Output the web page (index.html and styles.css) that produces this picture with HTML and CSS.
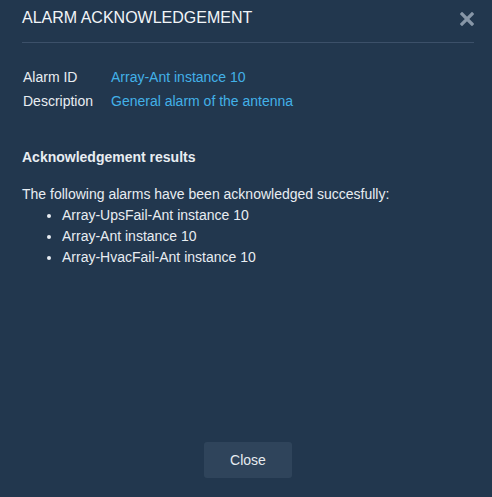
FILE: index.html
```html
<!DOCTYPE html>
<html>
<head>
<meta charset="utf-8">
<link rel="stylesheet" href="styles.css">
</head>
<body>
<div class="modal">
  <div class="header">
    <div class="title">ALARM ACKNOWLEDGEMENT</div>
    <span class="close-x" aria-label="close">
      <svg width="14" height="14" viewBox="0 0 14 14"><path d="M2 2 L12 12 M12 2 L2 12" stroke="#8796a7" stroke-width="3.2" stroke-linecap="square"/></svg>
    </span>
  </div>
  <div class="content">
    <div class="info">
      <div class="label">Alarm ID</div><div class="value">Array-Ant instance 10</div>
      <div class="label">Description</div><div class="value">General alarm of the antenna</div>
    </div>
    <div class="section-title">Acknowledgement results</div>
    <div class="intro">The following alarms have been acknowledged succesfully:</div>
    <ul class="list">
      <li>Array-UpsFail-Ant instance 10</li>
      <li>Array-Ant instance 10</li>
      <li>Array-HvacFail-Ant instance 10</li>
    </ul>
  </div>
  <div class="footer">
    <button class="btn">Close</button>
  </div>
</div>
</body>
</html>
```
FILE: styles.css
```css
html, body {
  margin: 0;
  padding: 0;
  background: #22374e;
}
body {
  font-family: "Liberation Sans", Arial, sans-serif;
  color: #e8edf2;
}
.modal {
  height: 497px;
  display: flex;
  flex-direction: column;
}
.header {
  margin: 0 18px 0 22px;
  padding-top: 8px;
  height: 43px;
  box-sizing: border-box;
  border-bottom: 1px solid #3c5069;
  display: flex;
  justify-content: space-between;
  align-items: flex-start;
}
.title {
  font-size: 16px;
  line-height: 20px;
  color: #f2f5f8;
}
.close-x {
  margin-top: 4px;
  margin-right: 0;
  display: block;
  line-height: 0;
}
.content {
  padding: 22px 22px 0 23px;
  font-size: 14px;
}
.info {
  display: grid;
  grid-template-columns: 88px auto;
  grid-auto-rows: 24px;
  align-items: center;
}
.value {
  color: #42b1e8;
}
.section-title {
  font-weight: bold;
  margin-top: 34px;
  margin-left: -1px;
  line-height: 20px;
}
.intro {
  margin-top: 17px;
  margin-left: -1px;
  line-height: 20px;
}
.list {
  margin: 1px 0 0 0;
  padding-left: 39px;
}
.list li {
  line-height: 21px;
}
.footer {
  margin-top: auto;
  padding: 0 0 19px 4px;
  display: flex;
  justify-content: center;
}
.btn {
  width: 88px;
  height: 36px;
  border: none;
  border-radius: 3px;
  background: #2f445b;
  color: #e6ebf0;
  font-family: "Liberation Sans", Arial, sans-serif;
  font-size: 14px;
  padding: 0;
}
```
